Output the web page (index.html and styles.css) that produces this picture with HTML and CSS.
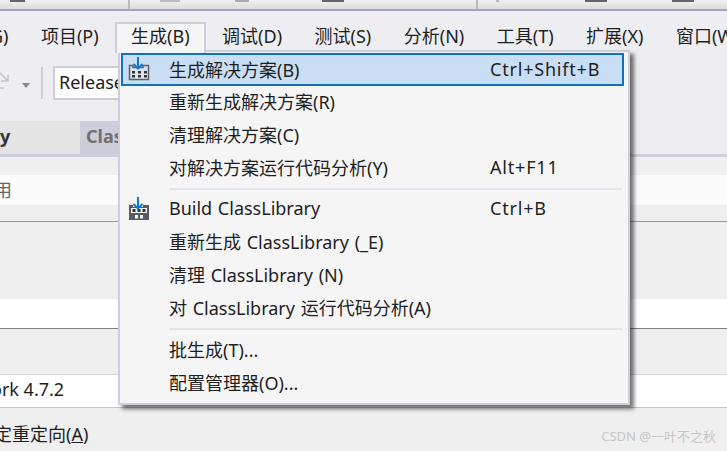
FILE: index.html
```html
<!DOCTYPE html>
<html lang="en">
<head>
  <meta charset="UTF-8">
  <meta name="viewport" content="width=device-width, initial-scale=1.0">
  <title>生成菜单</title>
  <link rel="stylesheet" href="styles.css">
</head>
<body>
  <div class="ide">
    <div class="title-strip">
      <span class="strip-mark mark-a"></span>
      <span class="strip-sep sep-a"></span>
      <span class="strip-mark mark-b"></span>
      <span class="strip-mark mark-c"></span>
      <span class="strip-mark mark-d"></span>
      <span class="strip-sep sep-b"></span>
      <span class="strip-mark mark-e"></span>
      <span class="strip-mark mark-f"></span>
      <span class="strip-mark mark-g"></span>
    </div>

    <nav class="menu-bar">
      <span class="menu-item">Git(G)</span>
      <span class="menu-item">项目(P)</span>
      <span class="menu-item menu-open">生成(B)</span>
      <span class="menu-item">调试(D)</span>
      <span class="menu-item">测试(S)</span>
      <span class="menu-item">分析(N)</span>
      <span class="menu-item">工具(T)</span>
      <span class="menu-item">扩展(X)</span>
      <span class="menu-item">窗口(W)</span>
    </nav>

    <div class="toolbar">
      <svg class="tool-arrow" width="12" height="24" viewBox="0 0 12 24">
        <path d="M3 2 L11 10 M11 4 V10 H4 M3 17 H7" fill="none" stroke="#c4c4c8" stroke-width="1.5"/>
      </svg>
      <span class="tool-caret"></span>
      <span class="tool-sep"></span>
      <div class="combo">Release</div>
    </div>

    <div class="tabs">
      <div class="tab">ry</div>
      <div class="tab tab-active">Class</div>
    </div>

    <section class="page">
      <div class="field-row field-first"><span class="field-text">用</span></div>
      <div class="divider"></div>
      <div class="field-row field-second"></div>
      <div class="field-row field-third"><span class="field-text">ork 4.7.2</span></div>
      <div class="footer-row">
        <span>定重定向(<u>A</u>)</span>
        <span class="watermark">CSDN @一叶不之秋</span>
      </div>
    </section>

    <div class="dropdown">
      <div class="drop-row drop-active">
        <svg class="drop-icon" width="22" height="24" viewBox="0 0 22 24">
          <path d="M1.5 8.5 H5 V10.5 H15 V8.5 H20.5 V22.5 H1.5 Z" fill="#dbe4ee" stroke="#5e5f66" stroke-width="1.5"/>
          <path d="M4 14 h3 v2.5 h-3 z M10 14 h3 v2.5 h-3 z M16 14 h3 v2.5 h-3 z M4 18 h3 v2.5 h-3 z M10 18 h3 v2.5 h-3 z M16 18 h3 v2.5 h-3 z" fill="#33343a"/>
          <path d="M10 0 V11 M5.5 7 L10 11.5 L14.5 7" fill="none" stroke="#0f78d0" stroke-width="2"/>
        </svg>
        <span class="drop-label">生成解决方案(B)</span>
        <span class="drop-key">Ctrl+Shift+B</span>
      </div>
      <div class="drop-row"><span class="drop-label">重新生成解决方案(R)</span></div>
      <div class="drop-row"><span class="drop-label">清理解决方案(C)</span></div>
      <div class="drop-row"><span class="drop-label">对解决方案运行代码分析(Y)</span><span class="drop-key">Alt+F11</span></div>
      <div class="drop-sep"></div>
      <div class="drop-row">
        <svg class="drop-icon" width="22" height="24" viewBox="0 0 22 24">
          <path d="M1 8 H5 V10 H15 V8 H21 V23 H1 Z" fill="#5a5b60"/>
          <path d="M3 11 H19 V16 H3 Z" fill="#f5f5f5"/>
          <path d="M4.5 12 h3 v3 h-3 z M9.5 12 h3 v3 h-3 z M14.5 12 h3 v3 h-3 z" fill="#33343a"/>
          <path d="M7 18 h3 v3.5 h-3 z M12 18 h3 v3.5 h-3 z" fill="#f5f5f5"/>
          <path d="M10 0 V11 M5.5 7 L10 11.5 L14.5 7" fill="none" stroke="#0f78d0" stroke-width="2"/>
        </svg>
        <span class="drop-label">Build ClassLibrary</span>
        <span class="drop-key">Ctrl+B</span>
      </div>
      <div class="drop-row"><span class="drop-label">重新生成 ClassLibrary (_E)</span></div>
      <div class="drop-row"><span class="drop-label">清理 ClassLibrary (N)</span></div>
      <div class="drop-row"><span class="drop-label">对 ClassLibrary 运行代码分析(A)</span></div>
      <div class="drop-sep drop-sep-lower"></div>
      <div class="drop-row"><span class="drop-label">批生成(T)...</span></div>
      <div class="drop-row"><span class="drop-label">配置管理器(O)...</span></div>
    </div>
  </div>
</body>
</html>
```

FILE: styles.css
```css
:root {
  --vs-bg: #eeeef2;
  --vs-line: #cccedb;
  --vs-panel: #efefef;
  --menu-bg: #f5f5f5;
  --text: #1e1e1e;
}

html, body {
  margin: 0;
  height: 100%;
  overflow: hidden;
}

body {
  font-family: "Noto Sans", "Noto Sans CJK SC", sans-serif;
  font-size: 18px;
  color: var(--text);
  background: var(--vs-panel);
}

.ide {
  position: relative;
  width: 727px;
  height: 451px;
  overflow: hidden;
}

.title-strip {
  display: flex;
  height: 9px;
  background: linear-gradient(#f0f0f0, #dcdcdc);
  border-bottom: 2px solid #a3a4c2;
}

.strip-sep {
  width: 2px;
  background: #bcbcbc;
}

.strip-mark {
  height: 2px;
}

.mark-a { width: 15px; margin-left: 10px; background: #666; }
.sep-a { margin-left: 103px; }
.mark-b { width: 20px; margin-left: 30px; background: #bbb; }
.mark-c { width: 14px; margin-left: 55px; background: #aaa; }
.mark-d { width: 22px; margin-left: 73px; background: #666; }
.sep-b { margin-left: 132px; }
.mark-e { width: 3px; margin-left: 18px; background: #bbb; }
.mark-f { width: 22px; margin-left: 86px; background: #666; }
.mark-g { width: 22px; margin-left: 65px; background: #666; }

.menu-bar {
  display: flex;
  height: 28px;
  padding-top: 11px;
  background: var(--vs-bg);
  margin-left: -56px;
  white-space: nowrap;
}

.menu-item {
  height: 28px;
  padding: 0 14.25px;
  border: 2px solid transparent;
  border-bottom: 0;
  box-sizing: border-box;
  line-height: 24px;
}

.menu-open {
  position: relative;
  z-index: 2;
  height: 31px;
  background: var(--menu-bg);
  border-color: var(--vs-line);
}

.toolbar {
  display: flex;
  align-items: center;
  height: 71px;
  padding-bottom: 5px;
  box-sizing: border-box;
  background: var(--vs-bg);
}

.tool-arrow {
  margin-left: -3px;
}

.tool-caret {
  margin: 4px 0 0 13px;
  border-left: 4px solid transparent;
  border-right: 4px solid transparent;
  border-top: 5px solid #8a8a8e;
}

.tool-sep {
  width: 2px;
  height: 32px;
  margin-left: 11px;
  background: var(--vs-line);
}

.combo {
  width: 90px;
  height: 34px;
  margin-left: 10px;
  padding-left: 4px;
  box-sizing: border-box;
  line-height: 29px;
  background: #fff;
  border: 2px solid var(--vs-line);
}

.tabs {
  display: flex;
  height: 36px;
  background: var(--vs-bg);
  border-bottom: 3px solid var(--vs-line);
  box-sizing: border-box;
  font-weight: 700;
  line-height: 30px;
}

.tab {
  width: 80px;
  box-sizing: border-box;
  background: #e4e4e4;
  text-indent: -8px;
  color: #333;
}

.tab-active {
  width: 70px;
  text-indent: 0;
  padding-left: 6px;
  background: var(--vs-line);
  color: #707070;
}

.page {
  height: 294px;
  padding-top: 18px;
  box-sizing: border-box;
}

.field-row {
  background: #fbfbfb;
}

.field-first {
  height: 30px;
  line-height: 30px;
  color: #666;
  margin-bottom: 16px;
}

.field-text {
  display: block;
  margin-left: -6px;
  white-space: nowrap;
}

.divider {
  height: 1px;
  background: #999;
  margin-bottom: 77px;
}

.field-second {
  height: 29px;
  background: #fff;
  border-bottom: 1px solid #808080;
  margin-bottom: 45px;
}

.field-third {
  height: 32px;
  line-height: 28px;
  background: #fff;
  border-top: 1px solid #d8d8d8;
  border-bottom: 1px solid #c6c6c6;
}

.field-third .field-text {
  margin-left: -9px;
}

.footer-row {
  display: flex;
  justify-content: space-between;
  align-items: center;
  height: 46px;
  margin-left: -6px;
  padding: 4px 11px 0 0;
  box-sizing: border-box;
}

.watermark {
  margin-top: 5px;
  font-size: 13px;
  color: #c6c6c6;
}

.dropdown {
  position: absolute;
  left: 118px;
  top: 50px;
  width: 512px;
  height: 355px;
  box-sizing: border-box;
  padding: 1px 4px 0 1px;
  background: var(--menu-bg);
  border: 2px solid var(--vs-line);
  box-shadow: 4px 4px 4px rgba(0, 0, 0, 0.55);
}

.drop-row {
  display: flex;
  align-items: center;
  height: 33px;
  padding: 0 0 4px 48px;
  position: relative;
  box-sizing: border-box;
}

.drop-active {
  background: #c9def5;
  border: 2px solid #0e70c0;
  padding: 0 0 2px 46px;
}

.drop-icon {
  position: absolute;
  left: 7px;
  top: 4px;
}

.drop-active .drop-icon {
  left: 5px;
  top: 2px;
}

.drop-label {
  width: 321px;
  white-space: nowrap;
  word-spacing: 1px;
}

.drop-key {
  white-space: nowrap;
  letter-spacing: 0.8px;
}

.drop-sep {
  height: 2px;
  margin: 3px 2px 3px 48px;
  background: #dfe3ea;
}

.drop-sep-lower {
  margin-bottom: 4px;
}
```
